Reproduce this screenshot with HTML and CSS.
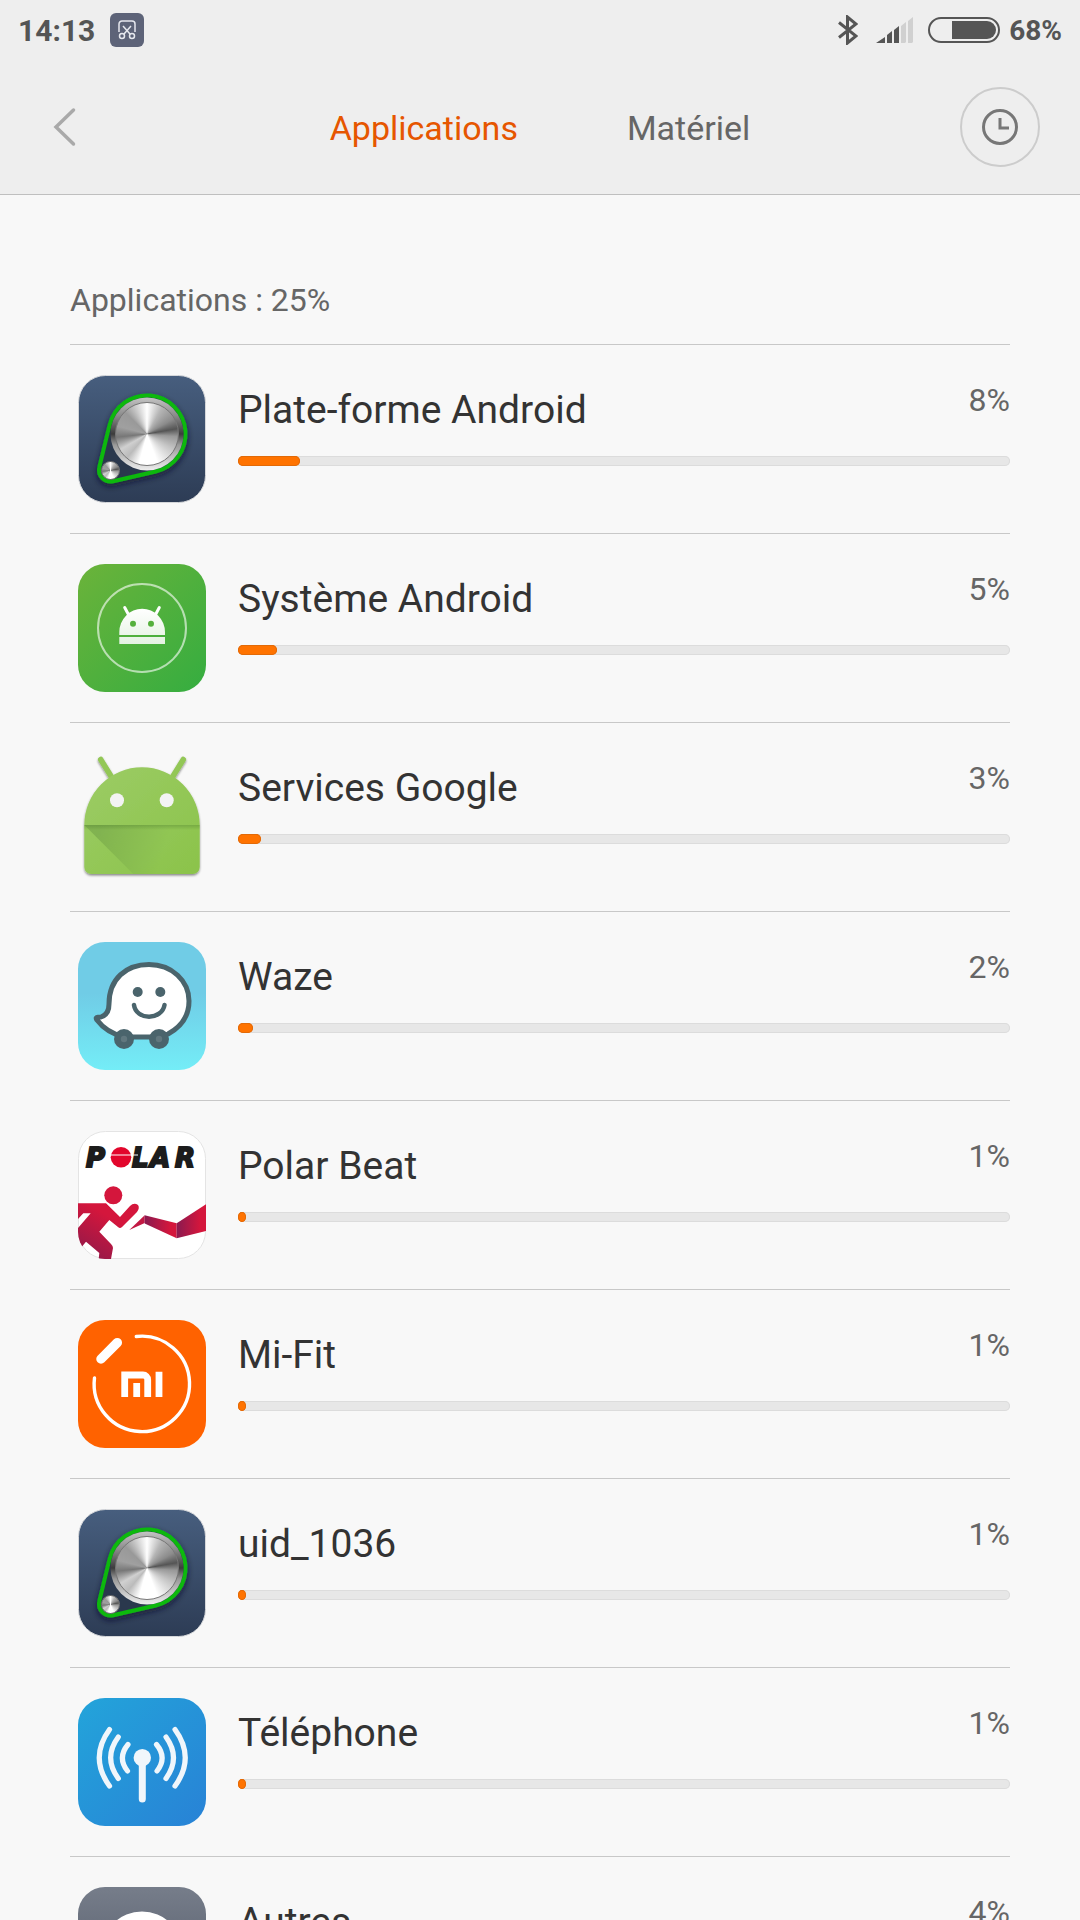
FILE: index.html
```html
<!doctype html>
<html lang="fr">
<head>
    <meta charset="UTF-8">
    <meta name="viewport" content="width=device-width, initial-scale=1.0">
    <title>Batterie</title>
    <link rel="stylesheet" href="styles.css">
</head>
<body>
    <header class="header">
        <div class="status">
            <span class="time">14:13</span>
            <span class="notif">
                <svg width="20" height="20" viewBox="0 0 20 20" fill="none" stroke="#e6e8ee" stroke-width="1.5">
                    <path d="M2 12V4a3 3 0 0 1 3-3h10a3 3 0 0 1 3 3v8"/>
                    <path d="M6 6l7 8M14 6l-7 8"/>
                    <circle cx="5" cy="16" r="2.5"/>
                    <circle cx="15" cy="16" r="2.5"/>
                </svg>
            </span>
            <div class="status_right">
                <svg class="bluetooth" width="20" height="30" viewBox="0 0 20 30" fill="none" stroke="#555" stroke-width="3">
                    <path d="M1 7.500l17 13.500-8.500 7V2l8.500 7L1 22.500"/>
                </svg>
                <svg class="signal" width="38" height="26" viewBox="0 0 38 26">
                    <path d="M0 26l9-6v6zM11 18l5-4v12h-5zM18 13l5-4v17h-5z" fill="#555"/>
                    <path d="M25 9l5-4v20l-1 1h-4zM32 4l5-4v25l-1 1h-4z" fill="#d0d0d0"/>
                </svg>
                <svg class="battery" width="72" height="26" viewBox="0 0 72 26">
                    <rect x="1" y="1" width="70" height="24" rx="12" fill="none" stroke="#555" stroke-width="2"/>
                    <path d="M24 4h35a9 9 0 0 1 0 18H24z" fill="#555"/>
                </svg>
                <span class="level">68%</span>
            </div>
        </div>
        <nav class="nav">
            <button type="button" class="back" aria-label="Retour">
                <svg width="24" height="40" viewBox="0 0 24 40" fill="none" stroke="#a9a9a9" stroke-width="3.5" stroke-linecap="round">
                    <path d="M20.500 3L3 20l17.500 17"/>
                </svg>
            </button>
            <div class="tabs">
                <button type="button" class="tab active">Applications</button>
                <button type="button" class="tab">Matériel</button>
            </div>
            <button type="button" class="history" aria-label="Historique">
                <svg width="36" height="36" viewBox="0 0 36 36" fill="none" stroke="#777" stroke-width="3">
                    <circle cx="18" cy="18" r="16.500"/>
                    <path d="M18 9v10h9"/>
                </svg>
            </button>
        </nav>
    </header>

    <main class="con">
        <h1 class="total">Applications : 25%</h1>
        <ul class="list">
            <li>
                <svg class="icon" viewBox="0 0 128 128">
                    <defs>
                        <linearGradient id="navy" x1="0" y1="0" x2="0" y2="1">
                            <stop offset="0" stop-color="#475e7e"/>
                            <stop offset="1" stop-color="#2d3c55"/>
                        </linearGradient>
                        <linearGradient id="rim" x1="0" y1="0" x2="0" y2="1">
                            <stop offset="0" stop-color="#c4c4c4"/>
                            <stop offset=".25" stop-color="#8a8a8a"/>
                            <stop offset=".5" stop-color="#3c3c3c"/>
                            <stop offset=".65" stop-color="#999"/>
                            <stop offset="1" stop-color="#eee"/>
                        </linearGradient>
                        <filter id="soft" x="-20%" y="-20%" width="140%" height="140%">
                            <feDropShadow dx="0" dy="3" stdDeviation="3" flood-color="#101828" flood-opacity=".7"/>
                        </filter>
                    </defs>
                    <rect x=".5" y=".5" width="127" height="127" rx="27" fill="url(#navy)" stroke="#d5d7da"/>
                    <path d="M31.600 49.900A38.500 38.500 0 1 1 77.600 96.500L35.100 106.200A11.500 11.500 0 0 1 21.300 92.300Z" fill="#2b384d" stroke="#09b80e" stroke-width="4" filter="url(#soft)"/>
                    <circle cx="69" cy="59" r="36.500" fill="url(#rim)"/>
                    <foreignObject x="37" y="27" width="64" height="64"><div class="knob"></div></foreignObject>
                    <foreignObject x="23" y="86" width="19" height="19"><div class="knob small"></div></foreignObject>
                </svg>
                <div class="info">
                    <div class="row"><span class="name">Plate-forme Android</span><span class="percent">8%</span></div>
                    <div class="bar"><div class="fill" style="width: 8%"></div></div>
                </div>
            </li>
            <li>
                <svg class="icon" viewBox="0 0 128 128">
                    <defs>
                        <linearGradient id="green" x1="0" y1="0" x2="1" y2="1">
                            <stop offset="0" stop-color="#6bb33a"/>
                            <stop offset="1" stop-color="#35ad40"/>
                        </linearGradient>
                        <linearGradient id="white" x1="0" y1="0" x2="0" y2="1">
                            <stop offset="0" stop-color="#fff"/>
                            <stop offset="1" stop-color="#e4f2e2"/>
                        </linearGradient>
                    </defs>
                    <rect width="128" height="128" rx="27" fill="url(#green)"/>
                    <circle cx="64" cy="64" r="44" fill="none" stroke="#fff" stroke-opacity=".6" stroke-width="2"/>
                    <path d="M46.700 43.500l4 7.500M81.300 43.500l-4 7.500" stroke="#fff" stroke-width="3" stroke-linecap="round"/>
                    <path d="M41.300 71v-3a22.700 23 0 0 1 45.700 0v3zM41.300 73H87v7H41.300z" fill="url(#white)"/>
                    <circle cx="55" cy="59.700" r="3" fill="#55b03d"/>
                    <circle cx="73" cy="59.700" r="3" fill="#55b03d"/>
                </svg>
                <div class="info">
                    <div class="row"><span class="name">Système Android</span><span class="percent">5%</span></div>
                    <div class="bar"><div class="fill" style="width: 5%"></div></div>
                </div>
            </li>
            <li>
                <svg class="icon" viewBox="0 0 128 128">
                    <defs>
                        <linearGradient id="robot" x1="0" y1="0" x2="1" y2="1">
                            <stop offset="0" stop-color="#9ccc65"/>
                            <stop offset="1" stop-color="#8bc34a"/>
                        </linearGradient>
                        <linearGradient id="fold" gradientUnits="userSpaceOnUse" x1="20" y1="80" x2="85" y2="100">
                            <stop offset="0" stop-color="#5a8a3a" stop-opacity=".35"/>
                            <stop offset="1" stop-color="#5a8a3a" stop-opacity="0"/>
                        </linearGradient>
                        <linearGradient id="chin" x1="0" y1="0" x2="0" y2="1">
                            <stop offset="0" stop-color="#4a7a2a" stop-opacity=".35"/>
                            <stop offset="1" stop-color="#4a7a2a" stop-opacity="0"/>
                        </linearGradient>
                        <filter id="lift" x="-10%" y="-10%" width="120%" height="120%">
                            <feDropShadow dx="0" dy="1.500" stdDeviation="1.200" flood-color="#000" flood-opacity=".45"/>
                        </filter>
                    </defs>
                    <g filter="url(#lift)">
                        <path d="M22.700 6.500l13 21M105.300 6.500l-13 21" stroke="#93c757" stroke-width="5.500" stroke-linecap="round"/>
                        <path d="M6.300 72a57.700 57.700 0 0 1 115.400 0v42a7 7 0 0 1-7 7H13.300a7 7 0 0 1-7-7z" fill="url(#robot)"/>
                    </g>
                    <path d="M6.300 72h115.400v42a7 7 0 0 1-7 7H55.300z" fill="url(#fold)"/>
                    <rect x="6.300" y="72" width="115.400" height="5" fill="url(#chin)"/>
                    <circle cx="39" cy="47.300" r="7" fill="#f3f3f3"/>
                    <circle cx="88.700" cy="47.300" r="7" fill="#f3f3f3"/>
                </svg>
                <div class="info">
                    <div class="row"><span class="name">Services Google</span><span class="percent">3%</span></div>
                    <div class="bar"><div class="fill" style="width: 3%"></div></div>
                </div>
            </li>
            <li>
                <svg class="icon" viewBox="0 0 128 128">
                    <defs>
                        <linearGradient id="sky" x1="0" y1="0" x2="0" y2="1">
                            <stop offset=".4" stop-color="#70cce6"/>
                            <stop offset="1" stop-color="#74edf7"/>
                        </linearGradient>
                    </defs>
                    <rect width="128" height="128" rx="27" fill="url(#sky)"/>
                    <path d="M46 95C34 92 25 86 19 78C17 75 19 75 23 75C29 73 31 69 31 62C31 37 48 22.500 71 22.500C94 22.500 111 39 111 59C111 76 101 86 90 92L81 95Z" fill="#fff" stroke="#4a646c" stroke-width="5" stroke-linejoin="round"/>
                    <circle cx="59.700" cy="50" r="5" fill="#4a646c"/>
                    <circle cx="82.300" cy="50" r="5" fill="#4a646c"/>
                    <path d="M56 63c2 15.500 28 15.500 30.500 0" fill="none" stroke="#4a646c" stroke-width="4.500" stroke-linecap="round"/>
                    <circle cx="46" cy="97" r="10" fill="#4a646c"/>
                    <circle cx="81" cy="97" r="10" fill="#4a646c"/>
                    <circle cx="46" cy="97" r="3.200" fill="#61777e"/>
                    <circle cx="81" cy="97" r="3.200" fill="#61777e"/>
                </svg>
                <div class="info">
                    <div class="row"><span class="name">Waze</span><span class="percent">2%</span></div>
                    <div class="bar"><div class="fill" style="width: 2%"></div></div>
                </div>
            </li>
            <li>
                <svg class="icon" viewBox="0 0 128 128">
                    <defs>
                        <linearGradient id="runner" gradientUnits="userSpaceOnUse" x1="45" y1="70" x2="10" y2="128">
                            <stop offset=".3" stop-color="#d4163c"/>
                            <stop offset="1" stop-color="#921949"/>
                        </linearGradient>
                        <linearGradient id="ribbon">
                            <stop offset="0" stop-color="#8a1a50"/>
                            <stop offset=".8" stop-color="#d4163c"/>
                        </linearGradient>
                        <clipPath id="tile"><rect width="128" height="128" rx="27"/></clipPath>
                    </defs>
                    <rect x=".5" y=".5" width="127" height="127" rx="27" fill="#fff" stroke="#e4e4e4"/>
                    <text class="polar" y="36" x="8 54 72 97">PLAR</text>
                    <circle cx="43" cy="26.300" r="10.300" fill="#e2062c"/>
                    <path d="M30 24h30" stroke="#fff"/>
                    <g clip-path="url(#tile)">
                        <circle cx="35.300" cy="64.300" r="9" fill="#d4163c"/>
                        <path d="M0 72.300H28L42 86L52 75Q56 71 60 74Q62 77 59 81L44 96Q42 98 40 96L31.300 89L21.300 100.700L33 113Q35 115 35 117L33 128H20.700L21.300 122L8 110.700L2 118L0 115V97L12.700 82.300H5.300L0 88Z" fill="url(#runner)"/>
                        <path d="M51.300 99L66.700 84.300V92Z" fill="#c21843"/>
                        <path d="M66.700 84.300L98.700 92.300V107.300L66.700 92.500Z" fill="url(#ribbon)"/>
                        <path d="M98.700 92.300L128 73.300V100L98.700 107.300Z" fill="url(#ribbon)"/>
                    </g>
                </svg>
                <div class="info">
                    <div class="row"><span class="name">Polar Beat</span><span class="percent">1%</span></div>
                    <div class="bar"><div class="fill" style="width: 1%"></div></div>
                </div>
            </li>
            <li>
                <svg class="icon" viewBox="0 0 128 128">
                    <rect width="128" height="128" rx="27" fill="#ff6200"/>
                    <g fill="none" stroke="#fff">
                        <path d="M58.300 16.500A47.700 47.700 0 1 1 16.500 58" stroke-width="3.400" stroke-linecap="round"/>
                        <path d="M23 39L39.300 22.700" stroke-width="9.500" stroke-linecap="round"/>
                        <path d="M46.700 77V55H65a4.700 4.700 0 0 1 4.700 4.700V77M58.700 63v14M81 51.700V77" stroke-width="6.800"/>
                    </g>
                </svg>
                <div class="info">
                    <div class="row"><span class="name">Mi-Fit</span><span class="percent">1%</span></div>
                    <div class="bar"><div class="fill" style="width: 1%"></div></div>
                </div>
            </li>
            <li>
                <svg class="icon" viewBox="0 0 128 128">
                    <rect x=".5" y=".5" width="127" height="127" rx="27" fill="url(#navy)" stroke="#d5d7da"/>
                    <path d="M31.600 49.900A38.500 38.500 0 1 1 77.600 96.500L35.100 106.200A11.500 11.500 0 0 1 21.300 92.300Z" fill="#2b384d" stroke="#09b80e" stroke-width="4" filter="url(#soft)"/>
                    <circle cx="69" cy="59" r="36.500" fill="url(#rim)"/>
                    <foreignObject x="37" y="27" width="64" height="64"><div class="knob"></div></foreignObject>
                    <foreignObject x="23" y="86" width="19" height="19"><div class="knob small"></div></foreignObject>
                </svg>
                <div class="info">
                    <div class="row"><span class="name">uid_1036</span><span class="percent">1%</span></div>
                    <div class="bar"><div class="fill" style="width: 1%"></div></div>
                </div>
            </li>
            <li>
                <svg class="icon" viewBox="0 0 128 128">
                    <defs>
                        <linearGradient id="blue" x1="0" y1="0" x2="1" y2="1">
                            <stop offset="0" stop-color="#23a4da"/>
                            <stop offset="1" stop-color="#2882d6"/>
                        </linearGradient>
                    </defs>
                    <rect width="128" height="128" rx="27" fill="url(#blue)"/>
                    <g fill="none" stroke="#f0f6fb" stroke-width="5.200" stroke-linecap="round">
                        <path d="M31.500 31.500Q11 59.700 31.500 88M40.300 39Q25 59.700 40.300 80.500M50 46.500Q39 59.700 49.500 73"/>
                        <path d="M97 31.500Q117.500 59.700 97 88M88 39Q103 59.700 88 80.500M78.500 46.500Q89.500 59.700 79 73"/>
                        <path d="M64.300 60v41" stroke-width="7"/>
                    </g>
                    <circle cx="64.300" cy="59.700" r="8.700" fill="#f0f6fb"/>
                </svg>
                <div class="info">
                    <div class="row"><span class="name">Téléphone</span><span class="percent">1%</span></div>
                    <div class="bar"><div class="fill" style="width: 1%"></div></div>
                </div>
            </li>
            <li>
                <svg class="icon" viewBox="0 0 128 128">
                    <defs>
                        <linearGradient id="grey" x1="0" y1="0" x2="0" y2="1">
                            <stop offset="0" stop-color="#767d8a"/>
                            <stop offset="1" stop-color="#4d5462"/>
                        </linearGradient>
                    </defs>
                    <rect width="128" height="128" rx="27" fill="url(#grey)"/>
                    <circle cx="64" cy="65" r="40.500" fill="#fff"/>
                </svg>
                <div class="info">
                    <div class="row"><span class="name">Autres</span><span class="percent">4%</span></div>
                    <div class="bar"><div class="fill" style="width: 4%"></div></div>
                </div>
            </li>
        </ul>
    </main>
</body>
</html>
```
FILE: styles.css
```css
*{
    padding:0;
    margin:0;
    box-sizing: border-box;
}
body{
    height: 100vh;
    display: flex;
    flex-direction: column;
    background: #f8f8f8;
    color: #333;
    font-family: Roboto, "Noto Sans", sans-serif;
}
ul{
    list-style: none;
}
button{
    border:0;
    background: none;
    font-family: inherit;
    cursor: pointer;
}
svg{
    display: block;
    flex-shrink: 0;
}

/* header */
.header{
    flex-shrink: 0;
    background: #eee;
    border-bottom: 1px solid #bfbfbf;
}
.status{
    height: 60px;
    padding: 0 18px;
    display: flex;
    align-items: center;
    font-size: 30px;
    font-weight: bold;
    color: #555;
}
.notif{
    width: 34px;
    height: 34px;
    margin-left: 15px;
    display: flex;
    align-items: center;
    justify-content: center;
    border-radius: 6px;
    background: #5d6378;
}
.status_right{
    margin-left: auto;
    display: flex;
    align-items: center;
}
.signal{
    margin-left: 18px;
}
.battery{
    margin: 0 9px 0 14px;
}
.level{
    font-size: 28px;
}
.nav{
    height: 134px;
    padding: 0 40px;
    display: grid;
    grid-template-columns: 1fr auto 1fr;
    align-items: center;
}
.back{
    width: 48px;
    height: 80px;
    padding-left: 13px;
}
.tabs{
    display: flex;
    gap: 109px;
}
.tab{
    padding-top: 2px;
    font-size: 34px;
    line-height: 48px;
    color: #666;
}
.tab.active{
    color: #e65600;
}
.history{
    width: 80px;
    height: 80px;
    justify-self: end;
    display: flex;
    align-items: center;
    justify-content: center;
    border: 2px solid #ccc;
    border-radius: 50%;
}

/* list */
.con{
    flex: 1;
    min-height: 0;
    padding: 86px 70px 0;
    overflow-y: auto;
    scrollbar-width: none;
}
.total{
    padding-bottom: 25px;
    border-bottom: 1px solid #c8c8c8;
    font-size: 32px;
    line-height: 38px;
    font-weight: normal;
    color: #666;
}
.list li{
    padding: 30px 0 30px 8px;
    display: flex;
    gap: 32px;
    border-bottom: 1px solid #c8c8c8;
}
.icon{
    width: 128px;
    height: 128px;
}
.info{
    flex: 1;
    padding-top: 6px;
}
.row{
    display: flex;
    justify-content: space-between;
    align-items: flex-start;
}
.name{
    font-size: 39px;
    line-height: 58px;
}
.percent{
    font-size: 32px;
    line-height: 38px;
    color: #666;
}
.bar{
    height: 10px;
    margin-top: 17px;
    border-radius: 5px;
    background: #e7e7e7;
    box-shadow: inset 0 0 0 1px #dcdcdc;
}
.fill{
    height: 10px;
    border-radius: min(5px, 50%) / 5px;
    background: #ff7300;
    box-shadow: inset 0 0 0 1px #e26a08;
}

/* brushed metal wheels of the system icon */
.knob{
    width: 64px;
    height: 64px;
    border: 1px solid #777;
    border-radius: 50%;
    background: conic-gradient(#fff, #b5b5b5 30deg, #8c8c8c 60deg, #555 80deg, #999 95deg, #c4c4c4 120deg, #fff 160deg, #fff 195deg, #bbb 220deg, #d0d0d0 240deg, #777 264deg, #a0a0a0 285deg, #999 315deg, #ddd 345deg, #fff);
}
.knob.small{
    width: 19px;
    height: 19px;
}
.polar{
    font-family: "DejaVu Sans", sans-serif;
    font-size: 26px;
    font-weight: bold;
    font-style: italic;
    fill: #1c1c1c;
    stroke: #1c1c1c;
    stroke-width: 2px;
}
```
